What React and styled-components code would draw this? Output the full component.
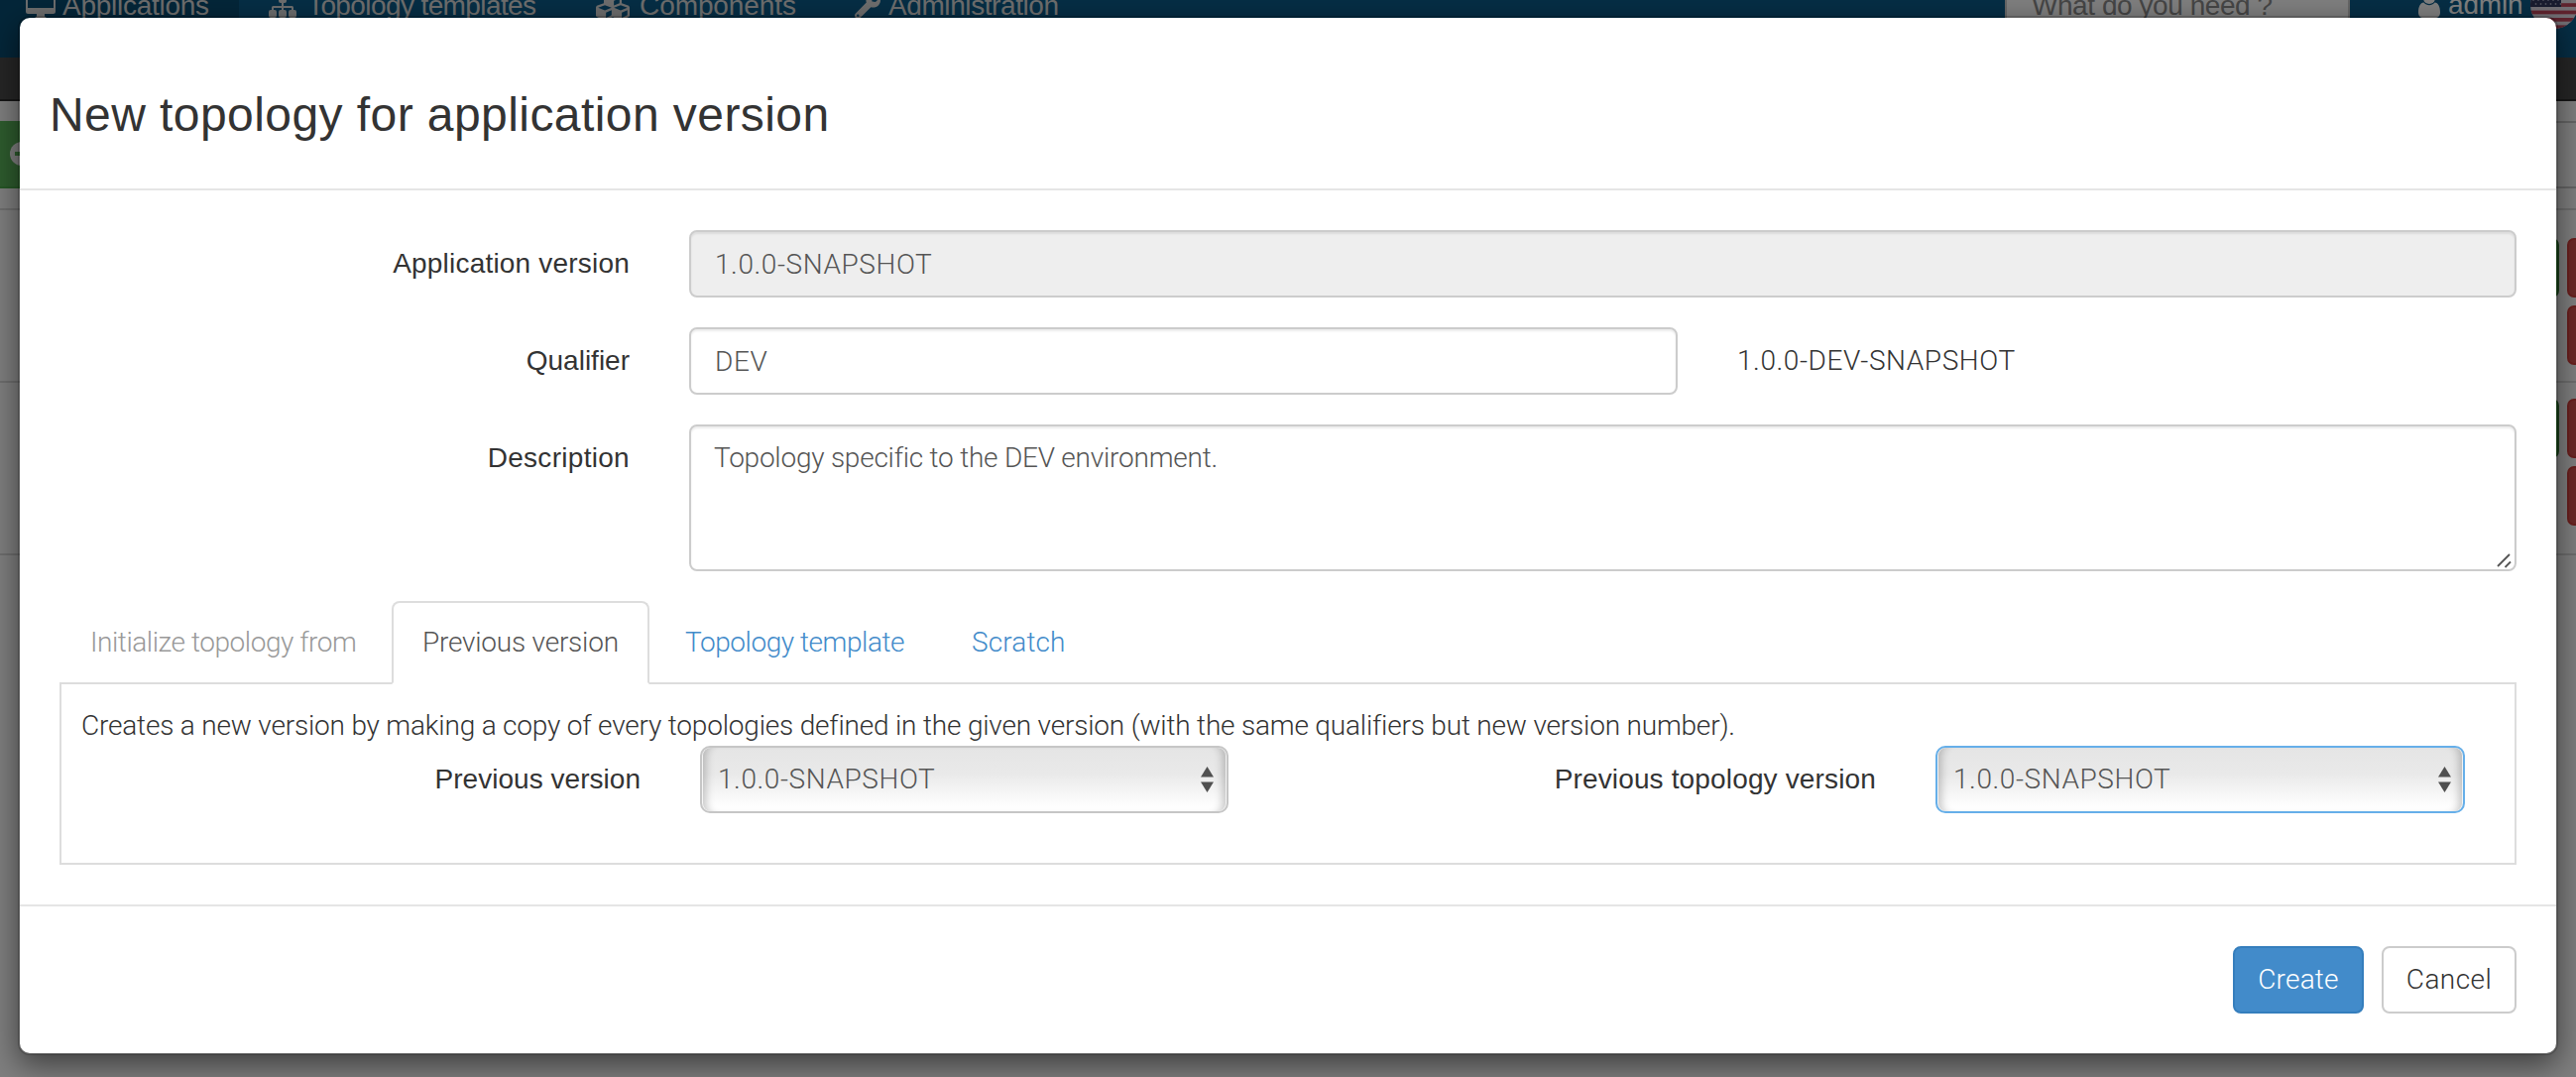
import React from 'react';
import styled, { createGlobalStyle, css } from 'styled-components';
import { FaCubes, FaWrench } from 'react-icons/fa';

const light = css`
  font-family: Roboto, 'Helvetica Neue', sans-serif;
  font-weight: 300;
`;
const regular = css`
  font-family: 'Liberation Sans', Arial, sans-serif;
  font-weight: 400;
`;

const GlobalStyle = createGlobalStyle`
  *, *::before, *::after { box-sizing: border-box; }
  html, body { margin: 0; padding: 0; overflow: hidden; background: #fff; }
  body { ${light} font-size: 28px; line-height: 40px; color: #333; }
`;

const Screen = styled.div`
  position: relative;
  width: 2598px;
  height: 1086px;
  overflow: hidden;
`;

/* ---------- page behind the dialog ---------- */

const Page = styled.div`
  margin-top: -42px;
  display: flex;
  flex-direction: column;
`;

const NavBar = styled.nav`
  ${regular}
  display: flex;
  align-items: stretch;
  height: 100px;
  background: #0c5c8a;
  color: #dcdcdc;
`;

const NavItem = styled.a`
  display: flex;
  align-items: center;
  flex: none;
  width: ${(p) => p.$width}px;
  padding: 0 0 4px ${(p) => p.$indent || 30}px;
  gap: ${(p) => p.$gap}px;
  letter-spacing: ${(p) => p.$ls}px;
  white-space: nowrap;
  background: ${(p) => (p.$active ? '#094c73' : 'transparent')};
  svg { flex: none; }
`;

const SearchBox = styled.div`
  align-self: center;
  width: 348px;
  height: 68px;
  margin: 0 69px 0 auto;
  padding: 10px 25px;
  border: 2px solid #ccc;
  background: #fff;
  color: #8c8c8c;
  letter-spacing: -0.44px;
  white-space: nowrap;
`;

const UserMenu = styled.div`
  display: flex;
  align-items: center;
  padding-bottom: 6px;
  margin-right: -2px;
  color: #fff;
`;

const UserName = styled.span`
  width: 83px;
  margin-left: 8px;
  letter-spacing: -0.17px;
  padding-bottom: 1px;
`;

const SubBar = styled.div`
  height: 44px;
  background: #4c4c4c;
  border-bottom: 2px solid #2c2c2c;
`;

const Toolbar = styled.div`
  display: flex;
  justify-content: space-between;
  height: 108px;
  padding: 20px 0;
`;

const AddButton = styled.div`
  display: flex;
  align-items: center;
  width: 120px;
  padding-left: 10px;
  background: #5cb85c;
  border-bottom: 2px solid #4cae4c;
`;

const FilterBox = styled.div`
  width: 60px;
  border: 2px solid #ccc;
  border-right: 0;
`;

const ListRow = styled.div`
  display: flex;
  justify-content: flex-end;
  align-items: flex-start;
  gap: 8px;
  height: 174px;
  padding-top: ${(p) => p.$top}px;
  border-top: 2px solid #ddd;
`;

const ListEnd = styled.div`
  height: 480px;
  border-top: 2px solid #ddd;
`;

const ActionColumn = styled.div`
  display: flex;
  flex-direction: column;
  gap: 8px;
  width: ${(p) => p.$width}px;
`;

const RowAction = styled.div`
  width: 60px;
  height: 60px;
  border-radius: 7px;
  border: 2px solid ${(p) => (p.$danger ? '#d43f3a' : '#398439')};
  background: ${(p) => (p.$danger ? '#d9534f' : '#449d44')};
`;

/* ---------- dialog ---------- */

const Backdrop = styled.div`
  position: absolute;
  inset: 0;
  padding: 16px 18px;
  background: rgba(0, 0, 0, 0.5);
`;

const Dialog = styled.section`
  width: 2562px;
  height: 1048px;
  border: 2px solid rgba(0, 0, 0, 0.2);
  border-radius: 12px;
  background: #fff;
  background-clip: padding-box;
  box-shadow: 0 10px 30px rgba(0, 0, 0, 0.5);
`;

const DialogHeader = styled.header`
  height: 174px;
  padding: 72px 30px 0;
  border-bottom: 2px solid #e5e5e5;
`;

const Title = styled.h3`
  ${regular}
  margin: 0;
  font-size: 48px;
  line-height: 52px;
  letter-spacing: 0.43px;
`;

const DialogBody = styled.div`
  padding: 40px;
`;

const DialogFooter = styled.footer`
  display: flex;
  justify-content: flex-end;
  gap: 18px;
  padding: 40px;
  border-top: 2px solid #e5e5e5;
`;

const FormRow = styled.div`
  display: flex;
  align-items: flex-start;
  margin-bottom: ${(p) => p.$gap ?? 30}px;
`;

const Label = styled.label`
  ${regular}
  flex: none;
  width: ${(p) => p.$width || 575}px;
  margin-right: 60px;
  padding-top: 14px;
  text-align: right;
  white-space: nowrap;
  letter-spacing: ${(p) => p.$ls}px;
`;

const control = css`
  ${light}
  display: block;
  font-size: 28px;
  line-height: 40px;
  color: #555;
  border: 2px solid #ccc;
  border-radius: 8px;
  box-shadow: inset 0 2px 2px rgba(0, 0, 0, 0.075);
  outline: none;
  margin: 0;
`;

const Input = styled.input`
  ${control}
  width: ${(p) => p.$width}px;
  height: 68px;
  padding: 12px 24px;
  letter-spacing: ${(p) => p.$ls}px;
  background: ${(p) => (p.readOnly ? '#eee' : '#fff')};
`;

const TextAreaWrap = styled.div`
  position: relative;
  width: 1843px;
  height: 148px;
`;

const TextArea = styled.textarea`
  ${control}
  width: 100%;
  height: 100%;
  padding: 12px 23px;
  resize: none;
  letter-spacing: -0.23px;
  background: #fff;
`;

const Grip = styled.svg`
  position: absolute;
  right: 5px;
  bottom: 3px;
`;

const FullVersion = styled.span`
  padding: 14px 0 0 60px;
  letter-spacing: 0.58px;
`;

const Tabs = styled.ul`
  display: flex;
  gap: 4px;
  height: 84px;
  margin: 0;
  padding: 0;
  list-style: none;
  border-bottom: 2px solid #ddd;
`;

const tabColors = { disabled: '#999', active: '#555', link: '#428bca' };

const Tab = styled.li`
  width: ${(p) => p.$width}px;
  height: 84px;
  padding: 20px 0 20px ${(p) => p.$indent || 30}px;
  border: 2px solid transparent;
  border-radius: 8px 8px 0 0;
  color: ${(p) => tabColors[p.$kind]};
  letter-spacing: ${(p) => p.$ls}px;
  white-space: nowrap;
  ${(p) =>
    p.$kind === 'active' &&
    css`
      background: #fff;
      border-color: #ddd;
      border-bottom-color: #fff;
    `}
`;

const TabPanel = styled.div`
  padding: 22px 0 50px;
  border: 2px solid #ddd;
  border-top: 0;
`;

const Hint = styled.p`
  margin: 0;
  padding-left: 20px;
  letter-spacing: -0.19px;
  white-space: nowrap;
`;

const SelectBox = styled.div`
  display: flex;
  align-items: center;
  justify-content: space-between;
  width: ${(p) => p.$width}px;
  height: 68px;
  padding: 0 ${(p) => (p.$focused ? 12 : 13)}px 0 16px;
  border: 2px solid ${(p) => (p.$focused ? '#66afe9' : '#c6c6c6')};
  border-radius: 10px;
  color: #555;
  letter-spacing: 0.58px;
  background: linear-gradient(#e5e5e5, #e9e9e9 40%, #fefefe 92%);
  box-shadow: inset 1px 0 0 rgba(255, 255, 255, 0.8), inset -1px 0 0 rgba(255, 255, 255, 0.8),
    inset 11px 0 8px -7px rgba(0, 0, 0, 0.22), inset -11px 0 8px -7px rgba(0, 0, 0, 0.22);
`;

const Button = styled.button`
  ${light}
  width: ${(p) => p.$width}px;
  height: 68px;
  padding: 0;
  font-size: 28px;
  line-height: 40px;
  letter-spacing: ${(p) => p.$ls}px;
  border-radius: 8px;
  border: 2px solid ${(p) => (p.$primary ? '#357ebd' : '#ccc')};
  background: ${(p) => (p.$primary ? '#428bca' : '#fff')};
  color: ${(p) => (p.$primary ? '#fff' : '#333')};
`;

/* ---------- drawings ---------- */

const DesktopIcon = () => (
  <svg width="30" height="28" viewBox="0 0 30 28" fill="currentColor">
    <path
      fillRule="evenodd"
      d="M2.500 0h25A2.500 2.500 0 0 1 30 2.500v17a2.500 2.500 0 0 1-2.500 2.500H19v2.500l2 1.500v1H9v-1l2-1.500V22H2.500A2.500 2.500 0 0 1 0 19.500v-17A2.500 2.500 0 0 1 2.500 0zM2 2.500V16h26V2.500z"
    />
  </svg>
);

const SitemapIcon = () => (
  <svg width="28" height="26" viewBox="0 0 28 26" fill="currentColor">
    <rect x="10" y="2" width="8" height="8" rx="2" />
    <path d="M13 9h2v4h8.500A1.500 1.500 0 0 1 25 14.500V18h-2v-3h-8v3h-2v-3H5v3H3v-3.500A1.500 1.500 0 0 1 4.500 13H13z" />
    <rect x="0" y="17" width="8" height="8" rx="2" />
    <rect x="10" y="17" width="8" height="8" rx="2" />
    <rect x="20" y="17" width="8" height="8" rx="2" />
  </svg>
);

const UserIcon = () => (
  <svg width="22" height="26" viewBox="0 0 22 26" fill="currentColor">
    <circle cx="11" cy="6" r="6" />
    <path d="M5.500 10.500C2 10.500 0 15 0 20.500 0 24 2 26 5 26h12c3 0 5-2 5-5.500 0-5.500-2-10-5.500-10-3 3.600-8 3.600-11 0z" />
  </svg>
);

const STRIPES = [0, 1, 2, 3, 4, 5, 6];
const STAR_ROWS = [3, 7, 11, 15, 19, 23];

const FlagIcon = () => (
  <svg width="48" height="48" viewBox="0 0 48 48">
    <defs>
      <clipPath id="flag-disc">
        <circle cx="24" cy="24" r="24" />
      </clipPath>
    </defs>
    <g clipPath="url(#flag-disc)">
      <rect width="48" height="48" fill="#e6e0ea" />
      {STRIPES.map((i) => (
        <rect key={i} y={i * 7.4} width="48" height="3.7" fill="#c0465c" />
      ))}
      <rect width="31" height="26" fill="#33385f" />
      {STAR_ROWS.map((y, r) =>
        [0, 1, 2, 3, 4, 5].map((c) => (
          <circle key={`${y}-${c}`} cx={3 + c * 5 + (r % 2) * 2.5} cy={y} r="0.9" fill="#9fa2b8" />
        ))
      )}
    </g>
  </svg>
);

const PlusCircleIcon = () => (
  <svg width="24" height="24" viewBox="0 0 24 24">
    <circle cx="12" cy="12" r="12" fill="#fff" />
    <path d="M5 10h5V5h4v5h5v4h-5v5h-4v-5H5z" fill="#5cb85c" />
  </svg>
);

const SelectArrows = () => (
  <svg width="13" height="26" viewBox="0 0 13 26" fill="#505050">
    <path d="M6.500 0L13 10.500H0z" />
    <path d="M6.500 26L0 15.500h13z" />
  </svg>
);

function Select({ width, focused, children }) {
  return (
    <SelectBox $width={width} $focused={focused} role="combobox" aria-expanded="false">
      <span>{children}</span>
      <SelectArrows />
    </SelectBox>
  );
}

function BackgroundPage() {
  return (
    <Page aria-hidden="true">
      <NavBar>
        <NavItem $active $width={241} $indent={26} $gap={7} $ls={-0.27}>
          <DesktopIcon />
          Applications
        </NavItem>
        <NavItem $width={330} $gap={11} $ls={-0.6}>
          <SitemapIcon />
          Topology templates
        </NavItem>
        <NavItem $width={261} $gap={10} $ls={-0.08}>
          <FaCubes size={34} />
          Components
        </NavItem>
        <NavItem $width={265} $gap={8} $ls={-0.41}>
          <FaWrench size={26} />
          Administration
        </NavItem>
        <SearchBox>What do you need ?</SearchBox>
        <UserMenu>
          <UserIcon />
          <UserName>admin</UserName>
          <FlagIcon />
        </UserMenu>
      </NavBar>
      <SubBar />
      <Toolbar>
        <AddButton>
          <PlusCircleIcon />
        </AddButton>
        <FilterBox />
      </Toolbar>
      {[28, 16].map((top) => (
        <ListRow key={top} $top={top}>
          <RowAction />
          <ActionColumn $width={9}>
            <RowAction $danger />
            <RowAction $danger />
          </ActionColumn>
        </ListRow>
      ))}
      <ListEnd />
    </Page>
  );
}

export default function App() {
  return (
    <Screen>
      <GlobalStyle />
      <BackgroundPage />
      <Backdrop>
        <Dialog role="dialog">
          <DialogHeader>
            <Title>New topology for application version</Title>
          </DialogHeader>
          <DialogBody>
            <FormRow>
              <Label $ls={0.2}>Application version</Label>
              <Input $width={1843} $ls={0.58} readOnly defaultValue="1.0.0-SNAPSHOT" />
            </FormRow>
            <FormRow>
              <Label $ls={0}>Qualifier</Label>
              <Input $width={997} $ls={0.6} defaultValue="DEV" />
              <FullVersion>1.0.0-DEV-SNAPSHOT</FullVersion>
            </FormRow>
            <FormRow>
              <Label $ls={0.3}>Description</Label>
              <TextAreaWrap>
                <TextArea defaultValue="Topology specific to the DEV environment." />
                <Grip width="15" height="15" viewBox="0 0 15 15" stroke="#555" strokeWidth="1.8">
                  <path d="M1 13L13 1M8.500 14L14 8.500" />
                </Grip>
              </TextAreaWrap>
            </FormRow>
            <Tabs>
              <Tab $kind="disabled" $width={331} $indent={29} $ls={-0.44}>Initialize topology from</Tab>
              <Tab $kind="active" $width={260} $indent={29} $ls={-0.22}>Previous version</Tab>
              <Tab $kind="link" $width={286} $ls={-0.44}>Topology template</Tab>
              <Tab $kind="link" $width={156} $indent={29} $ls={0.12}>Scratch</Tab>
            </Tabs>
            <TabPanel>
              <Hint>
                Creates a new version by making a copy of every topologies defined in the given version (with the same
                qualifiers but new version number).
              </Hint>
              <FormRow $gap={0}>
                <Label $width={584} $ls={0.03}>Previous version</Label>
                <Select width={533}>1.0.0-SNAPSHOT</Select>
                <Label $width={653} $ls={0.15}>Previous topology version</Label>
                <Select width={534} focused>1.0.0-SNAPSHOT</Select>
              </FormRow>
            </TabPanel>
          </DialogBody>
          <DialogFooter>
            <Button $primary $width={132} $ls={0.2}>Create</Button>
            <Button $width={136} $ls={0.45}>Cancel</Button>
          </DialogFooter>
        </Dialog>
      </Backdrop>
    </Screen>
  );
}
